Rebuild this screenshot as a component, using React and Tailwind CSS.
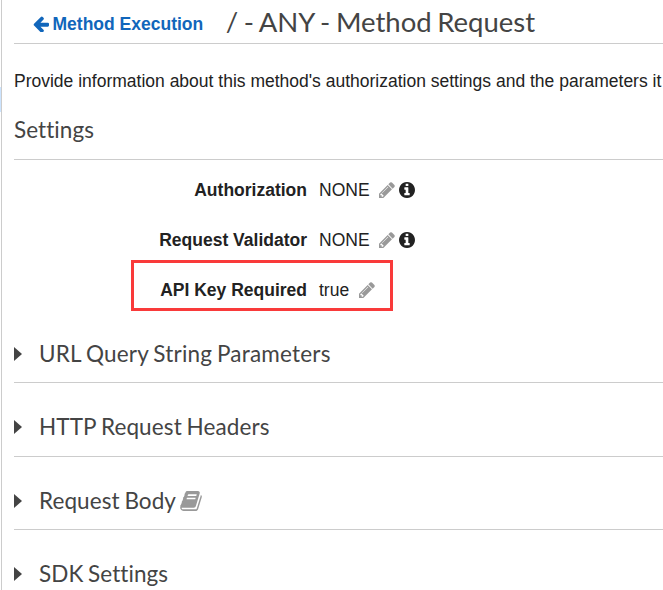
const ICONS = {
  arrow: "M1664 896v128q0 53-32.5 90.5t-84.5 37.5h-704l293 294q38 36 38 90t-38 90l-75 76q-37 37-90 37-52 0-91-37l-651-652q-37-37-37-90 0-52 37-91l651-650q38-38 91-38 52 0 90 38l75 74q38 38 38 91t-38 91l-293 293h704q52 0 84.5 37.5t32.5 90.5z",
  pencil: "M491 1536l91-91-235-235-91 91v107h128v128h107zm523-928q0-22-22-22-10 0-17 7l-542 542q-7 7-7 17 0 22 22 22 10 0 17-7l542-542q7-7 7-17zm-54-192l416 416-832 832h-416v-416zm683 96q0 53-37 90l-166 166-416-416 166-165q36-38 90-38 53 0 91 38l235 234q37 39 37 91z",
  info: "M1152 1376v-160q0-14-9-23t-23-9h-96v-512q0-14-9-23t-23-9h-320q-14 0-23 9t-9 23v160q0 14 9 23t23 9h96v320h-96q-14 0-23 9t-9 23v160q0 14 9 23t23 9h448q14 0 23-9t9-23zm-128-896v-160q0-14-9-23t-23-9h-192q-14 0-23 9t-9 23v160q0 14 9 23t23 9h192q14 0 23-9t9-23zm640 416q0 209-103 385.5t-279.5 279.5-385.5 103-385.5-103-279.5-279.5-103-385.5 103-385.5 279.5-279.5 385.5-103 385.5 103 279.5 279.5 103 385.5z",
  book: "M1703 478q40 57 18 129l-275 906q-19 64-76.5 107.5t-122.5 43.5h-923q-77 0-148.5-53.5t-99.5-131.5q-24-67-2-127 0-4 3-27t4-37q1-8-3-21.5t-3-19.5q2-11 8-21t16.5-23.5 16.5-23.5q23-38 45-91.5t30-91.5q3-10 .5-30t-.5-28q3-11 17-28t17-23q21-36 42-92t25-90q1-9-2.5-32t.5-28q4-13 22-30.5t22-22.5q19-26 42.5-84.5t27.5-96.5q1-8-3-25.5t-2-26.5q2-8 9-18t18-23 17-21q8-12 16.5-30.5t15-35 16-36 19.5-32 26.5-23.5 36-11.5 47.5 5.5l-1 3q38-9 51-9h761q74 0 114 56t18 130l-274 906q-36 119-71.5 153.5t-128.5 34.5h-869q-27 0-38 15-11 16-1 43 24 70 144 70h923q29 0 56-15.5t35-41.5l300-987q7-22 5-57 38 15 59 43zm-1064 2q-4 13 2 22.5t20 9.5h608q13 0 25.5-9.5t16.5-22.5l21-64q4-13-2-22.5t-20-9.5h-608q-13 0-25.5 9.5t-16.5 22.5zm-83 256q-4 13 2 22.5t20 9.5h608q13 0 25.5-9.5t16.5-22.5l21-64q4-13-2-22.5t-20-9.5h-608q-13 0-25.5 9.5t-16.5 22.5z",
};

// The glyphs fill a 1536-unit square centred in the 1792-unit grid.
function Icon({ name, className, viewBox = "128 128 1536 1536" }) {
  return (
    <svg viewBox={viewBox} className={className} fill="currentColor" aria-hidden="true">
      <path d={ICONS[name]} />
    </svg>
  );
}

function Setting({ label, value, info }) {
  return (
    <div className="flex h-[50px] items-center">
      <span className="w-[293px] text-right font-bold">{label}</span>
      <span className="ml-3">{value}</span>
      <Icon name="pencil" className="ml-[9.5px] size-4 text-[#999999]" />
      {info && <Icon name="info" className="ml-1 size-4" />}
    </div>
  );
}

function Section({ title, className, children }) {
  return (
    <section className={`flex items-center border-b border-[#cccccc] ${className}`}>
      <svg viewBox="0 0 8 14" className="mr-[17px] h-[14px] w-2 text-[#444444]" fill="currentColor">
        <path d="M0 0L8 7L0 14Z" />
      </svg>
      <h2 className="font-['Lato',sans-serif] text-[22.5px] leading-8 [word-spacing:-1.1px] text-[#444444]">{title}</h2>
      {children}
    </section>
  );
}

export default function App() {
  return (
    <div className="flex h-[590px] w-[663px] overflow-hidden bg-white font-['Liberation_Sans',Arial,sans-serif] text-[17.5px] leading-7 text-[#222222]">
      <div className="w-[2px] shrink-0 border-r border-[#cccccc] pt-[87px]">
        <div className="h-[25px] bg-[#cce4ff]" />
      </div>
      <main className="ml-3 min-w-0 flex-1">
        <header className="flex h-11 items-center border-b border-[#cccccc] pl-[18.5px]">
          <a className="flex items-center pt-[5px] font-bold text-[#1166bb]">
            <Icon name="arrow" className="mr-1 size-4" />
            Method Execution
          </a>
          <h1 className="ml-[22.5px] whitespace-nowrap font-['Lato',sans-serif] text-[27.5px] leading-9 [font-variant-ligatures:none] [word-spacing:-1.4px] text-[#444444]">
            / - ANY - Method Request
          </h1>
        </header>
        <p className="mt-[23px] h-7 whitespace-nowrap">
          Provide information about this method's authorization settings and the parameters it
        </p>
        <h2 className="mt-[19px] h-[46px] border-b border-[#cccccc] font-['Lato',sans-serif] text-[22.5px] leading-8 tracking-[0.06px] text-[#444444]">
          Settings
        </h2>
        <div className="relative pt-[5px]">
          <Setting label="Authorization" value="NONE" info />
          <Setting label="Request Validator" value="NONE" info />
          <Setting label="API Key Required" value="true" />
          <div className="absolute left-[117px] top-[100px] h-[51px] w-[262px] border-3 border-[#f93a3a]" />
        </div>
        <Section title="URL Query String Parameters" className="h-[68px] pt-[11px] tracking-[0.2px]" />
        <Section title="HTTP Request Headers" className="h-[74px] pt-[14px] tracking-[0.12px]" />
        <Section title="Request Body" className="h-[73px] pt-[15px] tracking-[0.08px]">
          <Icon name="book" viewBox="60 128 1672 1536" className="ml-1 h-5 w-[22px] text-[#999999]" />
        </Section>
        <Section title="SDK Settings" className="h-[74px] pt-[14px] tracking-[0.06px]" />
      </main>
    </div>
  );
}
